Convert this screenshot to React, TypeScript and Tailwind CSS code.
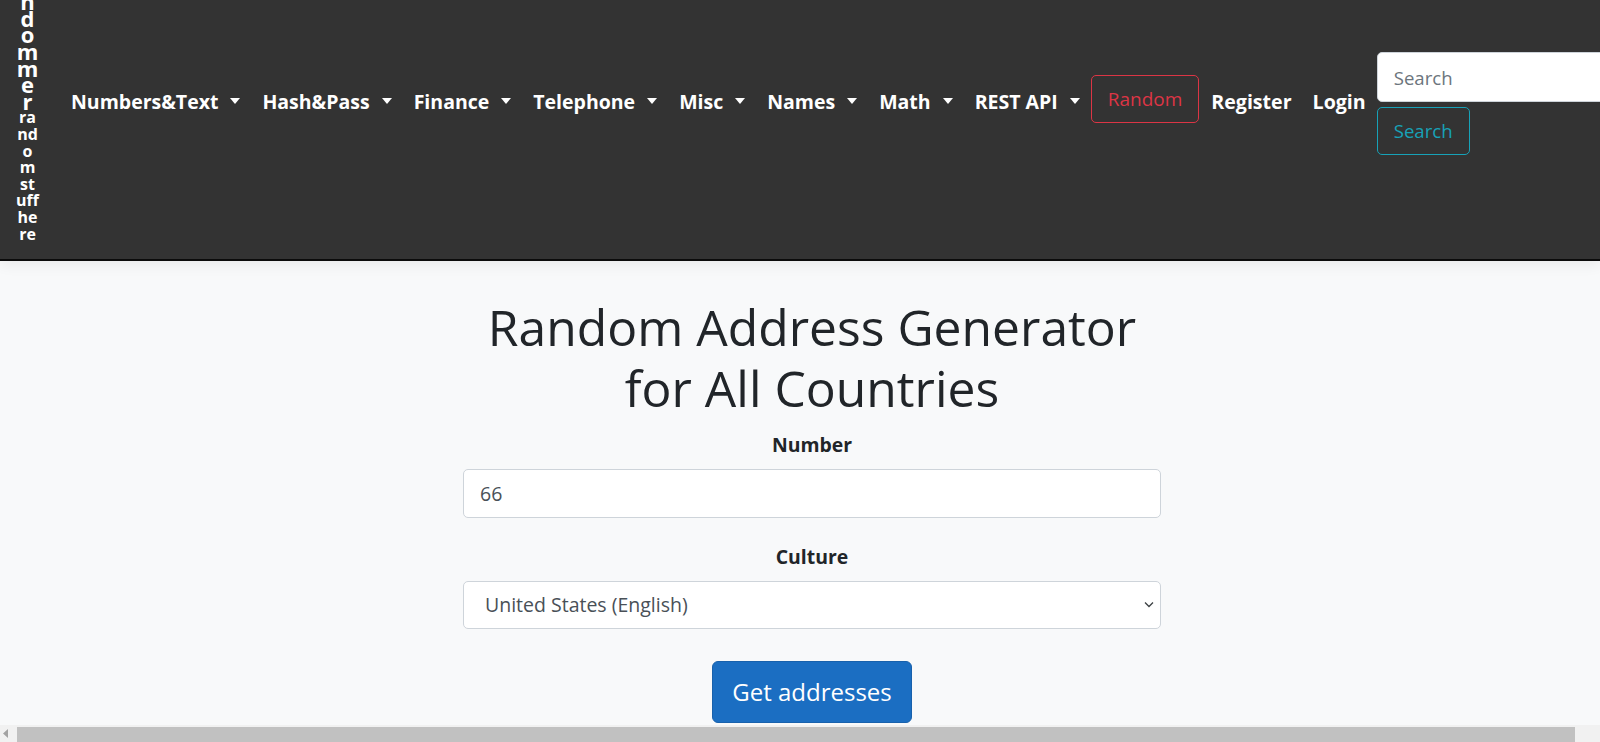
import React from "react";

const navItems = [
  "Numbers&Text",
  "Hash&Pass",
  "Finance",
  "Telephone",
  "Misc",
  "Names",
  "Math",
  "REST API",
];

const bigLines = ["r", "a", "n", "d", "o", "m", "m", "e", "r"];
const smallLines = ["ra", "nd", "o", "m", "st", "uff", "he", "re"];

function Caret() {
  return (
    <span className="ml-[12px] -mt-[2px] w-0 h-0 border-l-[5.5px] border-r-[5.5px] border-t-[6px] border-l-transparent border-r-transparent border-t-white" />
  );
}

export default function App() {
  return (
    <div className="h-screen w-full overflow-hidden flex flex-col bg-[#f8f9fa] font-['Open_Sans',sans-serif]">
      <header className="relative z-10 shrink-0 h-[261px] bg-[#333333] border-b-2 border-[#0b0b0b] shadow-[0_3px_14px_rgba(0,0,0,0.07)] flex items-start pl-[16px] overflow-hidden">
        <div className="shrink-0 w-[23px] -mt-[40px] text-white font-bold text-center">
          {bigLines.map((c, i) => (
            <div key={"b" + i} className="text-[22px] leading-[16.6px] h-[16.6px]">
              {c}
            </div>
          ))}
          {smallLines.map((c, i) => (
            <div key={"s" + i} className="text-[16px] leading-[16.6px] h-[16.6px]">
              {c}
            </div>
          ))}
        </div>

        <ul className="shrink-0 ml-[32px] mt-[75px] h-[48px] flex items-center whitespace-nowrap text-white font-bold">
          <li className="flex items-center gap-[22px] text-[19.5px]">
            {navItems.map((n) => (
              <a key={n} className="mt-[5px] flex items-center leading-[28px] cursor-pointer">
                <span>{n}</span>
                <Caret />
              </a>
            ))}
          </li>
          <li className="ml-[11px]">
            <button className="h-[48px] px-[16px] border border-[#dc3545] text-[#dc3545] rounded-[5px] font-normal text-[19px] leading-[30px]">
              Random
            </button>
          </li>
          <li className="ml-[12px] mt-[5px] leading-[28px] text-[19.6px]">Register</li>
          <li className="ml-[21px] mt-[5px] leading-[28px] text-[19.6px]">Login</li>
        </ul>

        <form className="shrink-0 ml-[11px] mt-[52px] flex flex-col items-start">
          <input
            placeholder="Search"
            className="w-[270px] h-[50px] rounded-[5px] bg-white border border-[#ced4da] px-[16px] text-[18.6px] text-[#495057] placeholder:text-[#6c757d] outline-none"
          />
          <button
            type="button"
            className="mt-[5px] h-[48px] px-[16px] border border-[#17a2b8] text-[#17a2b8] rounded-[5px] text-[18.6px] leading-[28px]"
          >
            Search
          </button>
        </form>
      </header>

      <main className="flex-1 min-h-0 overflow-hidden w-[1624px] flex flex-col items-center">
        <div className="w-[698px] flex flex-col items-center mt-[36px]">
          <h1 className="text-[49.8px] leading-[61px] text-[#212529] text-center font-normal">
            Random Address Generator for All Countries
          </h1>
          <label className="mt-[14px] text-[19.4px] leading-[24px] font-bold text-[#212529]">
            Number
          </label>
          <input
            defaultValue="66"
            className="mt-[12px] w-full h-[49px] border border-[#ced4da] rounded-[5px] bg-white px-[16px] text-[19.5px] text-[#495057] outline-none"
          />
          <label className="mt-[27px] text-[19.4px] leading-[24px] font-bold text-[#212529]">
            Culture
          </label>
          <div className="relative mt-[12px] w-full">
            <select className="appearance-none w-full h-[48px] border border-[#ced4da] rounded-[5px] bg-white pl-[21px] pr-[40px] text-[19.5px] text-[#495057] outline-none">
              <option>United States (English)</option>
            </select>
            <svg
              className="absolute right-[7px] top-[20px] pointer-events-none"
              width="10"
              height="7"
              viewBox="0 0 10 7"
              fill="none"
            >
              <path d="M1 1.5 L5 5.5 L9 1.5" stroke="#3c4043" strokeWidth="1.3" />
            </svg>
          </div>
          <button className="mt-[32px] px-[19.5px] py-[12px] text-[24px] leading-[36px] border border-[#1861ac] bg-[#1b6ec2] rounded-[6px] text-white">
            Get addresses
          </button>
        </div>
      </main>

      <div className="shrink-0 h-[17px] bg-[#f1f1f1] flex">
        <div className="w-[17px] flex items-center justify-start pl-[3px]">
          <svg width="5" height="9" viewBox="0 0 5 9">
            <path d="M5 0 L0 4.5 L5 9 Z" fill="#a3a3a3" />
          </svg>
        </div>
        <div className="w-[1558px] mt-[2px] bg-[#c1c1c1]" />
      </div>
    </div>
  );
}
